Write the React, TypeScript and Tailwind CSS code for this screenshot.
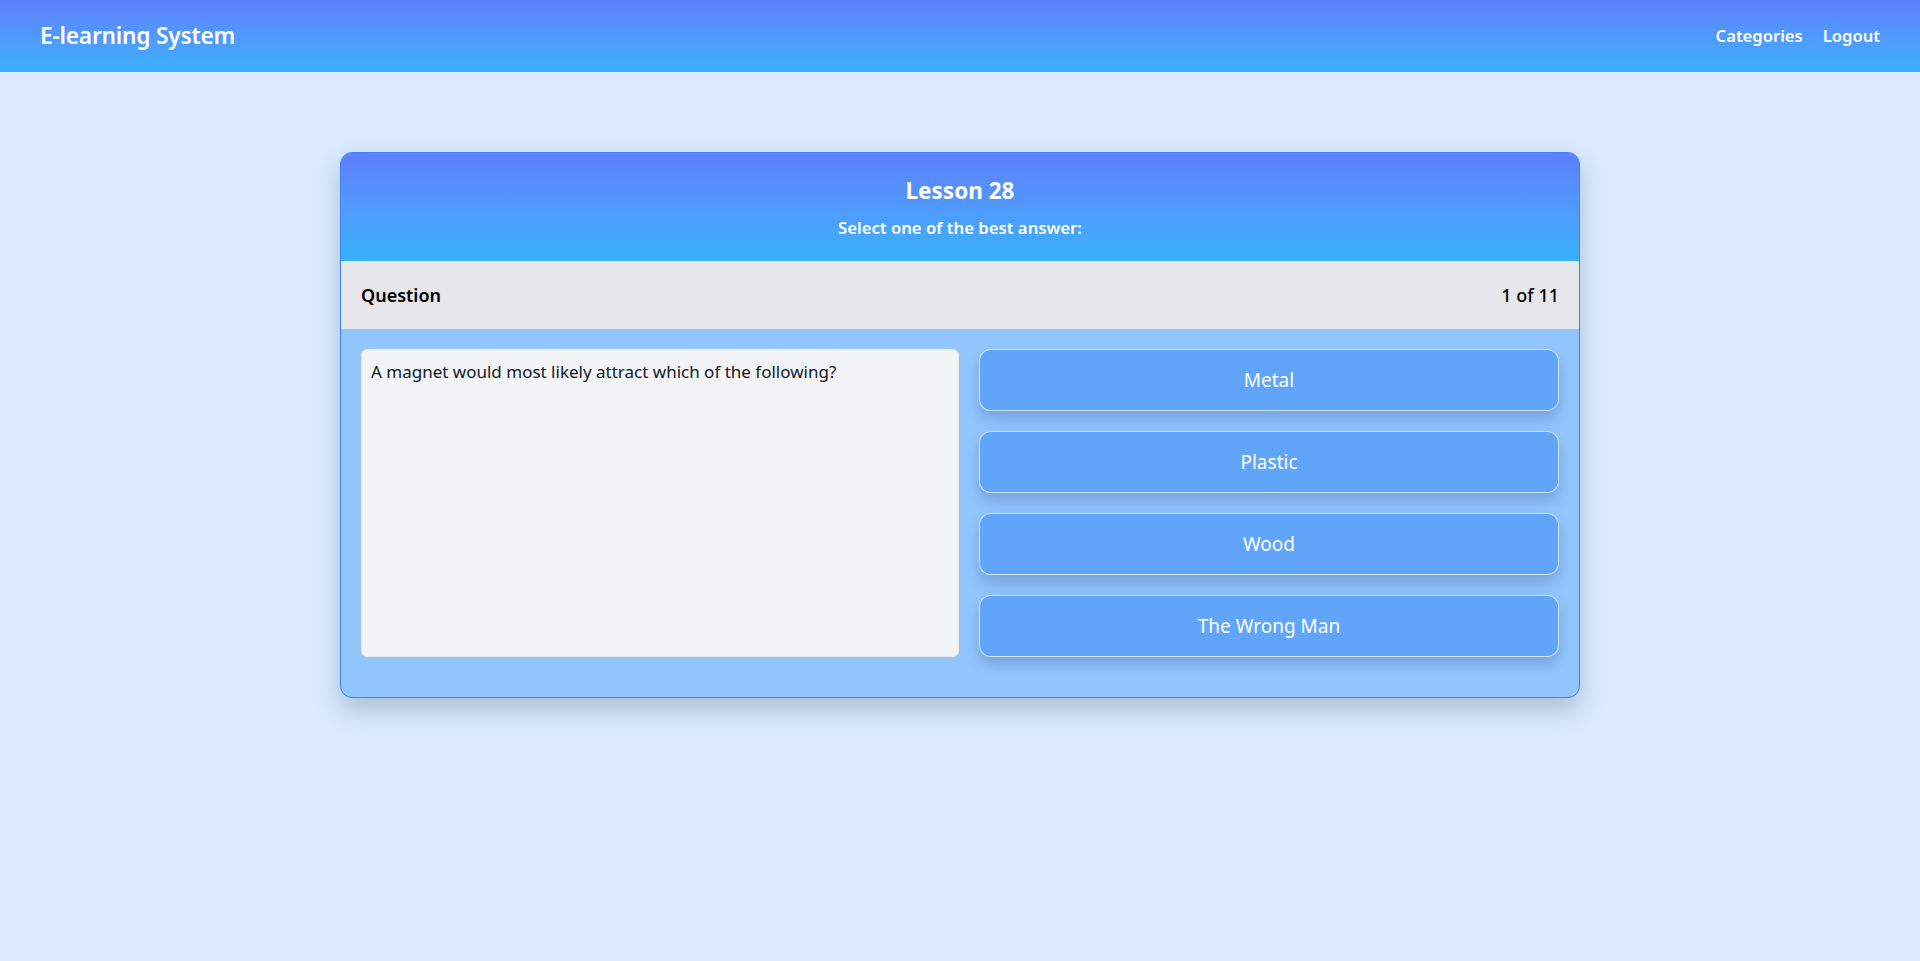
// Lesson quiz page — one question with four answer choices.

const answers = ["Metal", "Plastic", "Wood", "The Wrong Man"];

function NavBar() {
  return (
    <nav className="h-[72px] flex items-center justify-between px-10 bg-gradient-to-b from-[#5f7fff] to-[#36b1fb] text-white">
      <a className="text-[22.7px] font-semibold tracking-[-0.2px]">E-learning System</a>
      <div className="flex items-center gap-5 text-[16.6px] font-semibold">
        <a>Categories</a>
        <a>Logout</a>
      </div>
    </nav>
  );
}

export default function App() {
  return (
    <div
      className="min-h-[961px] bg-[#dbeafe]"
      style={{ fontFamily: '"Noto Sans", "Open Sans", sans-serif' }}
    >
      <NavBar />
      <main className="pt-20 flex justify-center">
        <div className="w-[1240px] rounded-xl border border-[#3b82f6] bg-[#93c5fd] overflow-hidden shadow-[0_12px_24px_rgba(30,58,100,0.25)]">
          <header className="pt-6 pb-[21px] text-center text-white bg-gradient-to-b from-[#5f7fff] to-[#36b1fb]">
            <h2 className="text-[22.5px] leading-7 font-bold">Lesson 28</h2>
            <p className="mt-[11px] text-[16.7px] leading-6 font-semibold">Select one of the best answer:</p>
          </header>

          <div className="h-[68px] flex items-center justify-between px-5 bg-[#e5e7eb] text-black text-[18px]">
            <span className="font-semibold">Question</span>
            <span className="font-medium">1 of 11</span>
          </div>

          <div className="grid grid-cols-[598fr_580fr] gap-5 px-5 pt-5 pb-10">
            <div className="rounded-md bg-[#f3f4f6] border border-[#e5e7eb] px-[9px] py-[9px] text-[17px] text-[#111827]">
              A magnet would most likely attract which of the following?
            </div>
            <div className="flex flex-col gap-5">
              {answers.map((a) => (
                <button
                  key={a}
                  className="h-[62px] rounded-xl border border-white/70 bg-[#60a5fa] text-white text-[19px] shadow-[0_8px_14px_rgba(40,80,140,0.28)]"
                >
                  {a}
                </button>
              ))}
            </div>
          </div>
        </div>
      </main>
    </div>
  );
}
